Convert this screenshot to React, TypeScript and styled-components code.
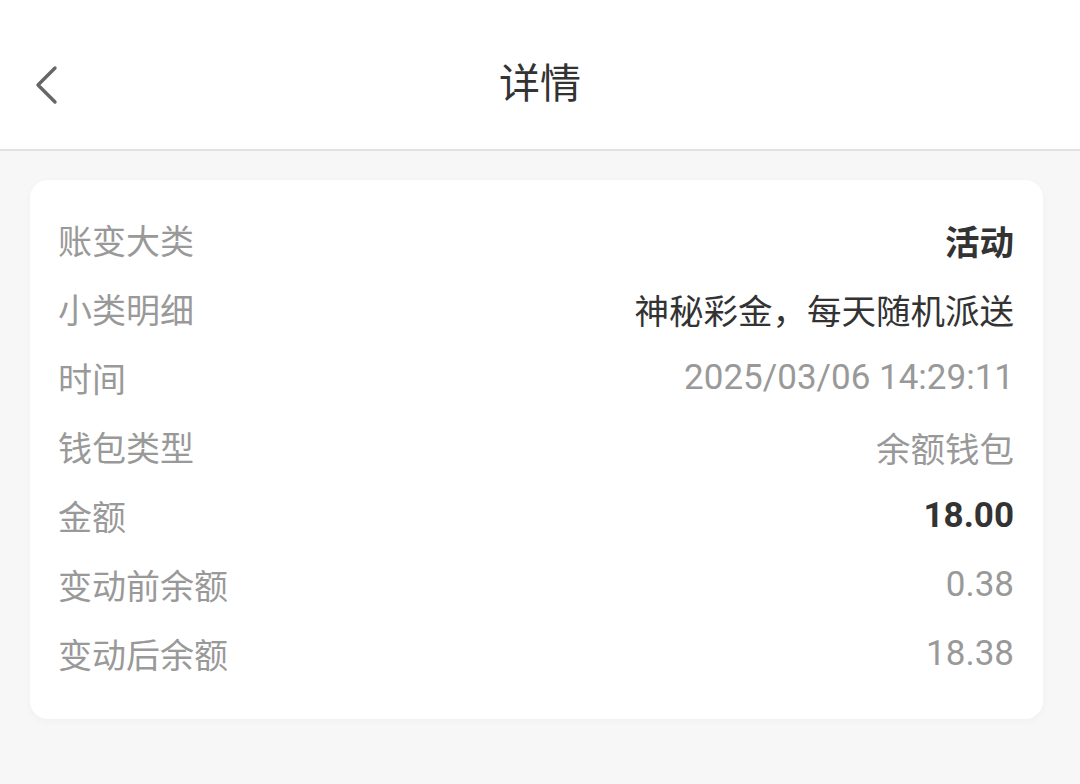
import React from 'react';
import styled, { createGlobalStyle } from 'styled-components';

const GlobalStyle = createGlobalStyle`
  html, body {
    margin: 0;
    padding: 0;
    background: #f7f7f7;
    font-family: Roboto, "Noto Sans CJK SC", sans-serif;
  }
`;

const Page = styled.div`
  width: 1080px;
  min-height: 784px;
  background: #f7f7f7;
`;

const Header = styled.header`
  height: 151px;
  box-sizing: border-box;
  padding-top: 20px;
  background: #ffffff;
  border-bottom: 2px solid #e2e2e2;
  display: grid;
  grid-template-columns: 120px 1fr 120px;
  align-items: center;
`;

const BackButton = styled.button`
  border: none;
  background: none;
  padding: 0 0 0 32px;
  display: flex;
  align-items: center;
  height: 100%;
  cursor: pointer;
`;

const Title = styled.h1`
  margin: 0;
  text-align: center;
  font-size: 41px;
  font-weight: 400;
  color: #333333;
  line-height: 1;
`;

const Body = styled.main`
  padding: 29px 37px 0 30px;
`;

const Card = styled.section`
  background: #ffffff;
  border-radius: 18px;
  padding: 25px 29px 31px 28px;
  box-shadow: 0 2px 8px rgba(0, 0, 0, 0.03);
`;

const Row = styled.div`
  height: 69px;
  display: flex;
  align-items: center;
  justify-content: space-between;
  font-size: 34px;
`;

const Label = styled.span`
  color: #999999;
`;

const Value = styled.span<{ $tone: 'strong' | 'dark' | 'muted'; $numeric?: boolean }>`
  color: ${p => (p.$tone === 'muted' ? '#999999' : '#333333')};
  font-weight: ${p => (p.$tone === 'strong' ? 700 : 400)};
  font-size: ${p => (p.$numeric ? '35px' : '34.5px')};
`;

type Item = { label: string; value: string; tone: 'strong' | 'dark' | 'muted'; numeric?: boolean };

const items: Item[] = [
  { label: '账变大类', value: '活动', tone: 'strong' },
  { label: '小类明细', value: '神秘彩金，每天随机派送', tone: 'dark' },
  { label: '时间', value: '2025/03/06 14:29:11', tone: 'muted', numeric: true },
  { label: '钱包类型', value: '余额钱包', tone: 'muted' },
  { label: '金额', value: '18.00', tone: 'strong', numeric: true },
  { label: '变动前余额', value: '0.38', tone: 'muted', numeric: true },
  { label: '变动后余额', value: '18.38', tone: 'muted', numeric: true },
];

const App: React.FC = () => {
  return (
    <Page>
      <GlobalStyle />
      <Header>
        <BackButton aria-label="返回">
          <svg width="28" height="40" viewBox="0 0 28 40" fill="none">
            <path d="M23 3 L6 20 L23 37" stroke="#666666" strokeWidth="3.4" strokeLinecap="round" strokeLinejoin="round" />
          </svg>
        </BackButton>
        <Title>详情</Title>
        <div />
      </Header>
      <Body>
        <Card>
          {items.map(item => (
            <Row key={item.label}>
              <Label>{item.label}</Label>
              <Value $tone={item.tone} $numeric={item.numeric}>
                {item.value}
              </Value>
            </Row>
          ))}
        </Card>
      </Body>
    </Page>
  );
};

export default App;
